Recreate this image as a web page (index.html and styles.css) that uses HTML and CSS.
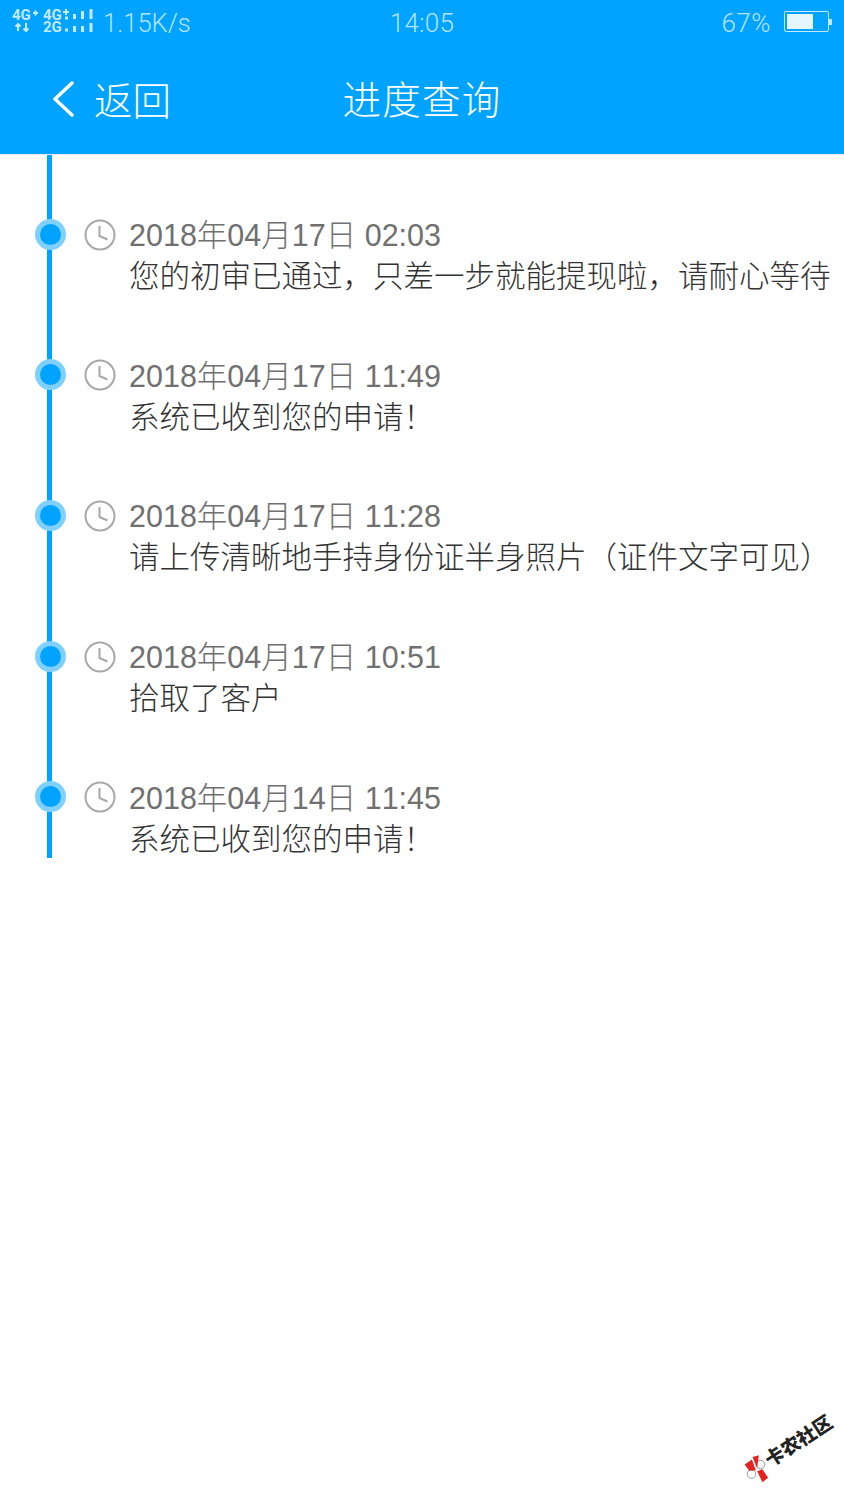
FILE: index.html
```html
<!doctype html>
<html lang="zh-cn">
<head>
    <meta charset="UTF-8">
    <title>进度查询</title>
    <link rel="stylesheet" href="styles.css">
</head>
<body>
    <div class="top">
        <div class="status">
            <div class="status_left">
                <svg class="signal" width="82" height="26" viewBox="12 8 82 26">
                    <text x="12" y="20" class="sig_txt">4G</text>
                    <path d="M33 13h5M35.500 10.500v5" class="sig_line"/>
                    <path d="M18 31v-7M15.500 26.500l2.500-2.500 2.500 2.500M26 23v8M23.500 28.500l2.500 2.500 2.500-2.500" class="sig_line"/>
                    <text x="43" y="20" class="sig_txt">4G</text>
                    <path d="M63 12h6M66 9v6" class="sig_line"/>
                    <text x="43" y="32" class="sig_txt">2G</text>
                    <rect x="65" y="16.500" width="3" height="3"/>
                    <rect x="65" y="28.500" width="3" height="3"/>
                    <rect x="73" y="14" width="3" height="5"/>
                    <rect x="73" y="26" width="3" height="6"/>
                    <rect x="81" y="11" width="3" height="8"/>
                    <rect x="81" y="26" width="3" height="6"/>
                    <rect x="89.500" y="9" width="3" height="10"/>
                    <rect x="89.500" y="23" width="3" height="9"/>
                </svg>
                <span class="speed">1.15K/s</span>
            </div>
            <div class="clock_txt">14:05</div>
            <div class="status_right">
                <span>67%</span>
                <div class="battery"><i class="battery_in"></i></div>
                <i class="battery_tip"></i>
            </div>
        </div>
        <div class="nav">
            <div class="back">
                <svg width="22" height="36" viewBox="0 0 22 36"><path d="M20 2L3 18 20 34" fill="none" stroke="#fff" stroke-width="3.500" stroke-linecap="round" stroke-linejoin="round"/></svg>
                <span>返回</span>
            </div>
            <div class="title">进度查询</div>
        </div>
    </div>

    <div class="line_wrap">
        <ul id="list">
            <li>
                <i class="dot"></i>
                <svg class="ico" viewBox="0 0 32 32"><circle cx="16" cy="16" r="14.500"/><path d="M15.500 7v10l8 3.500"/></svg>
                <div class="time">2018年04月17日 02:03</div>
                <p>您的初审已通过，只差一步就能提现啦，请耐心等待</p>
            </li>
            <li>
                <i class="dot"></i>
                <svg class="ico" viewBox="0 0 32 32"><circle cx="16" cy="16" r="14.500"/><path d="M15.500 7v10l8 3.500"/></svg>
                <div class="time">2018年04月17日 11:49</div>
                <p>系统已收到您的申请！</p>
            </li>
            <li>
                <i class="dot"></i>
                <svg class="ico" viewBox="0 0 32 32"><circle cx="16" cy="16" r="14.500"/><path d="M15.500 7v10l8 3.500"/></svg>
                <div class="time">2018年04月17日 11:28</div>
                <p>请上传清晰地手持身份证半身照片（证件文字可见）</p>
            </li>
            <li>
                <i class="dot"></i>
                <svg class="ico" viewBox="0 0 32 32"><circle cx="16" cy="16" r="14.500"/><path d="M15.500 7v10l8 3.500"/></svg>
                <div class="time">2018年04月17日 10:51</div>
                <p>拾取了客户</p>
            </li>
            <li>
                <i class="dot"></i>
                <svg class="ico" viewBox="0 0 32 32"><circle cx="16" cy="16" r="14.500"/><path d="M15.500 7v10l8 3.500"/></svg>
                <div class="time">2018年04月14日 11:45</div>
                <p>系统已收到您的申请！</p>
            </li>
        </ul>
    </div>

    <svg class="mark_bow" width="33" height="33" viewBox="0 140 100 100">
        <circle cx="62" cy="178" r="13" fill="#fff" stroke="#666" stroke-width="2"/>
        <circle cx="35" cy="207" r="13" fill="#fff" stroke="#666" stroke-width="2"/>
        <path d="M14 178L36 163 48 195 28 197z" fill="#e2231f"/>
        <path d="M38 155L57 150 52 190z" fill="#e2231f"/>
        <path d="M52 198L68 192 85 218 68 232z" fill="#e2231f"/>
    </svg>
    <span class="mark_txt">卡农社区</span>
</body>
</html>
```

FILE: styles.css
```css
*{
    padding:0;
    margin:0;
    box-sizing: border-box;
}
ul{
    list-style: none;
}
body{
    position: relative;
    height: 1500px;
    overflow: hidden;
    background: #fff;
    font-family: "Liberation Sans", "Noto Sans CJK SC", sans-serif;
}
.top{
    height: 155px;
    background: #00a3ff;
    border-bottom: 1px solid #e4e4e4;
}
.status{
    height: 45px;
    display: grid;
    grid-template-columns: 1fr auto 1fr;
    align-items: center;
    padding: 0 12px;
    color: #b5e3ff;
    font-family: Roboto, sans-serif;
    font-size: 26px;
    font-weight: 300;
}
.status_left{
    display: flex;
    align-items: center;
    gap: 9px;
}
.signal{
    fill: #c4e9ff;
    margin-bottom: 3px;
    overflow: visible;
}
.sig_txt{
    font-size: 15px;
    font-weight: 700;
}
.sig_line{
    fill: none;
    stroke: #c4e9ff;
    stroke-width: 2;
}
.speed{
    font-size: 25.500px;
}
.clock_txt{
    letter-spacing: 0.3px;
}
.status_right{
    display: flex;
    align-items: center;
    justify-content: flex-end;
}
.status_right span{
    margin-right: 13px;
    letter-spacing: 0.5px;
}
.battery{
    width: 45px;
    height: 21px;
    margin-bottom: 2px;
    border: 1px solid #c4e9ff;
    border-radius: 2px;
    padding: 2px;
}
.battery_in{
    display: block;
    width: 26px;
    height: 100%;
    background: #e6f6ff;
}
.battery_tip{
    width: 3px;
    height: 6px;
    margin-bottom: 2px;
    background: #c4e9ff;
}
.nav{
    height: 109px;
    position: relative;
    display: flex;
    align-items: center;
    justify-content: center;
    padding-bottom: 5px;
    color: #fff;
    font-size: 38.500px;
    font-weight: 300;
    font-family: "Noto Sans CJK SC", sans-serif;
}
.back{
    position: absolute;
    left: 52px;
    top: 30px;
    display: flex;
    align-items: center;
    gap: 20px;
    line-height: 46px;
}
.back svg{
    margin-top: 2px;
}
.title{
    letter-spacing: 1.300px;
}
.line_wrap{
    width: 5px;
    height: 703px;
    margin-left: 47px;
    background: #00a3ff;
}
#list{
    width: 790px;
    padding-top: 59px;
}
#list li{
    position: relative;
    height: 140.700px;
    padding-top: 1px;
    padding-left: 82px;
}
.dot{
    position: absolute;
    left: -12.500px;
    top: 4.500px;
    width: 31px;
    height: 31px;
    border-radius: 50%;
    background: #00a3ff;
    border: 5.500px solid #80d0ff;
}
.ico{
    position: absolute;
    left: 36.500px;
    top: 4.500px;
    width: 32px;
    height: 32px;
    fill: none;
    stroke: #a8a8a8;
    stroke-width: 2;
}
.time{
    height: 41px;
    line-height: 41px;
    font-size: 30.500px;
    font-weight: 300;
    font-kerning: none;
    color: #707070;
}
#list p{
    height: 41px;
    line-height: 41px;
    font-size: 30.500px;
    font-weight: 300;
    color: #333;
    white-space: nowrap;
}
.mark_bow{
    position: absolute;
    left: 740px;
    top: 1452px;
}
.mark_txt{
    position: absolute;
    left: 760px;
    top: 1428px;
    transform: rotate(-33deg);
    font-family: "Noto Sans CJK SC", sans-serif;
    font-size: 19px;
    line-height: 24px;
    font-weight: 900;
    color: #222;
    white-space: nowrap;
}
```
